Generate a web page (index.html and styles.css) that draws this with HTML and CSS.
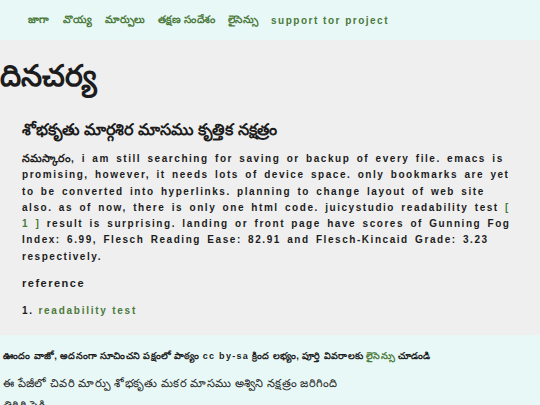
FILE: index.html
```html
<!DOCTYPE html>
<html lang="te">
<head>
<meta charset="utf-8">
<title>దినచర్య</title>
<link rel="stylesheet" href="styles.css">
</head>
<body>
<nav class="nav">
  <a class="te" href="#">జాగా</a>
  <a class="te" href="#">వొయ్య</a>
  <a class="te" href="#">మార్పులు</a>
  <a class="te" href="#">తక్షణ సందేశం</a>
  <a class="te" href="#">లైసెన్సు</a>
  <a href="#">support tor project</a>
</nav>
<main class="main">
  <h1 class="title">దినచర్య</h1>
  <article class="post">
    <h2 class="post-title">శోభకృతు మార్గశిర మాసము కృత్తిక నక్షత్రం</h2>
    <p class="post-text"><span class="te-inline">నమస్కారం</span>, i am still searching for saving or backup of every file. emacs is promising, however, it needs lots of device space. only bookmarks are yet to be converted into hyperlinks. planning to change layout of web site also. as of now, there is only one html code. juicystudio readability test <a href="#">[ 1 ]</a> result is surprising. landing or front page have scores of Gunning Fog Index: 6.99, Flesch Reading Ease: 82.91 and Flesch-Kincaid Grade: 3.23 respectively.</p>
    <h3 class="ref-title">reference</h3>
    <ol class="refs">
      <li>1. <a href="#">readability test</a></li>
    </ol>
  </article>
</main>
<footer class="footer">
  <p class="foot-small">ఊందం వాజో, అదనంగా సూచించని పక్షంలో పాఠ్యం <span class="lat">cc by-sa</span> క్రింద లభ్యం, పూర్తి వివరాలకు <a href="#">లైసెన్సు</a> చూడండి</p>
  <p class="foot-line">ఈ పేజీలో చివరి మార్పు శోభకృతు మకర మాసము అశ్విని నక్షత్రం జరిగింది</p>
  <p class="foot-line">తిరిగి పైకి</p>
</footer>
</body>
</html>
```
FILE: styles.css
```css
html, body {
  margin: 0;
  padding: 0;
}
body {
  font-family: "Liberation Sans", Arial, sans-serif;
  color: #1c1c1c;
  background: #e8f8f6;
}
a {
  color: #4b7a3c;
  text-decoration: none;
}
.nav {
  display: flex;
  align-items: center;
  gap: 13px;
  height: 40px;
  padding: 0 0 0 28px;
  background: #e8f8f6;
  font-size: 10px;
  font-weight: bold;
  letter-spacing: 1.5px;
}
.nav .te {
  font-size: 10.5px;
  letter-spacing: 0.3px;
}
.main {
  background: #efefef;
  padding: 12px 0 16px;
}
.title {
  margin: 0;
  font-size: 30px;
  font-weight: bold;
  line-height: 48px;
}
.post {
  padding: 0 22px;
}
.post-title {
  margin: 18px 0 8px;
  font-size: 16px;
  font-weight: bold;
  line-height: 24px;
}
.post-text {
  margin: 0;
  font-size: 10px;
  font-weight: bold;
  letter-spacing: 1.55px;
  word-spacing: 2px;
  line-height: 16.3px;
}
.te-inline {
  font-size: 11px;
  letter-spacing: 0;
  word-spacing: 0;
}
.ref-title {
  margin: 10px 0 12px;
  font-size: 11px;
  font-weight: bold;
  letter-spacing: 1.5px;
  line-height: 16px;
}
.refs {
  list-style: none;
  margin: 0;
  padding: 0;
  font-size: 10px;
  font-weight: bold;
  letter-spacing: 1.75px;
  line-height: 16px;
}
.footer {
  padding: 12px 3px 0;
}
.foot-small {
  margin: 0 0 9px;
  font-size: 9.5px;
  font-weight: bold;
  letter-spacing: 0.3px;
  line-height: 18px;
}
.foot-small .lat {
  font-size: 9px;
  letter-spacing: 1.3px;
}
.foot-line {
  margin: 0 0 4px;
  font-size: 11.3px;
  letter-spacing: 0.3px;
  line-height: 18px;
}
```
